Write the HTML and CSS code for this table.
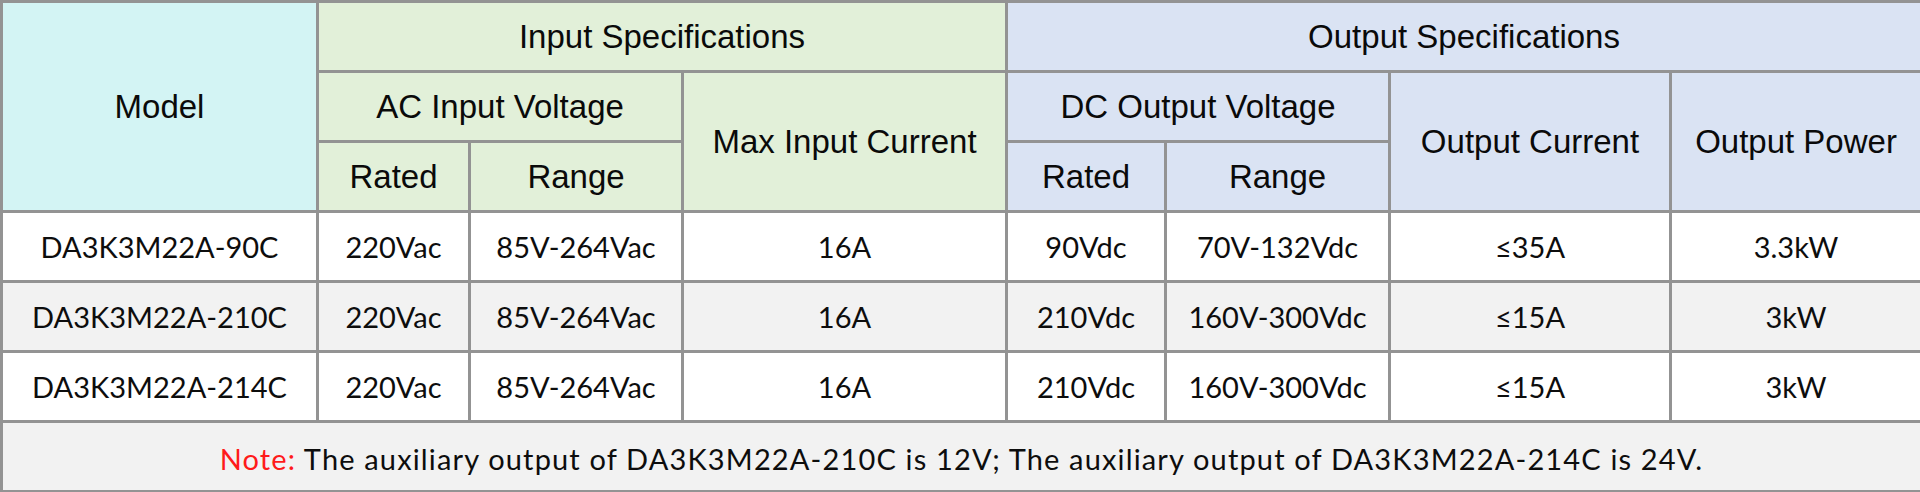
FILE: index.html
```html
<!DOCTYPE html>
<html lang="en">
<head>
<meta charset="utf-8">
<title>DA3K3M22A Specifications</title>
<link rel="stylesheet" href="styles.css">
</head>
<body>
<table class="spec">
  <colgroup>
    <col class="c-model">
    <col class="c-in-rated">
    <col class="c-in-range">
    <col class="c-in-max">
    <col class="c-out-rated">
    <col class="c-out-range">
    <col class="c-out-cur">
    <col class="c-out-pow">
  </colgroup>
  <thead>
    <tr class="hrow">
      <th rowspan="3" class="h-model">Model</th>
      <th colspan="3" class="h-in">Input Specifications</th>
      <th colspan="4" class="h-out">Output Specifications</th>
    </tr>
    <tr class="hrow">
      <th colspan="2" class="h-in">AC Input Voltage</th>
      <th rowspan="2" class="h-in">Max Input Current</th>
      <th colspan="2" class="h-out">DC Output Voltage</th>
      <th rowspan="2" class="h-out">Output Current</th>
      <th rowspan="2" class="h-out">Output Power</th>
    </tr>
    <tr class="hrow">
      <th class="h-in">Rated</th>
      <th class="h-in">Range</th>
      <th class="h-out">Rated</th>
      <th class="h-out">Range</th>
    </tr>
  </thead>
  <tbody>
    <tr class="drow">
      <td>DA3K3M22A-90C</td>
      <td>220Vac</td>
      <td>85V-264Vac</td>
      <td>16A</td>
      <td>90Vdc</td>
      <td>70V-132Vdc</td>
      <td>≤35A</td>
      <td>3.3kW</td>
    </tr>
    <tr class="drow alt">
      <td>DA3K3M22A-210C</td>
      <td>220Vac</td>
      <td>85V-264Vac</td>
      <td>16A</td>
      <td>210Vdc</td>
      <td>160V-300Vdc</td>
      <td>≤15A</td>
      <td>3kW</td>
    </tr>
    <tr class="drow">
      <td>DA3K3M22A-214C</td>
      <td>220Vac</td>
      <td>85V-264Vac</td>
      <td>16A</td>
      <td>210Vdc</td>
      <td>160V-300Vdc</td>
      <td>≤15A</td>
      <td>3kW</td>
    </tr>
    <tr class="drow note-row">
      <td colspan="8"><span class="note-label">Note:</span> The auxiliary output of DA3K3M22A-210C is 12V; The auxiliary output of DA3K3M22A-214C is 24V.</td>
    </tr>
  </tbody>
</table>
</body>
</html>
```

FILE: styles.css
```css
html, body {
  margin: 0;
  padding: 0;
  background: #ffffff;
}

.spec {
  width: 1920px;
  table-layout: fixed;
  border-collapse: collapse;
  color: #000;
}

.c-model { width: 316px; }
.c-in-rated { width: 152px; }
.c-in-range { width: 213px; }
.c-in-max { width: 324px; }
.c-out-rated { width: 159px; }
.c-out-range { width: 224px; }
.c-out-cur { width: 281px; }
.c-out-pow { width: 251px; }

.spec th,
.spec td {
  border: 3px solid #939393;
  padding: 0;
  text-align: center;
  vertical-align: middle;
}

.spec th {
  font-family: "Liberation Sans", Arial, sans-serif;
  font-weight: normal;
  font-size: 33px;
  color: #0a0a0a;
}

.hrow { height: 70px; }
.drow { height: 70px; }

.h-model { background: #d3f4f4; }
.h-in { background: #e2f0d9; }
.h-out { background: #dae3f3; }

.spec td {
  font-family: Lato, "Liberation Sans", sans-serif;
  font-size: 29px;
  color: #0d0d0d;
  background: #ffffff;
}

.drow.alt td { background: #f2f2f2; }
.note-row td {
  background: #f2f2f2;
  letter-spacing: 1.15px;
  padding-top: 4px;
}

.note-label { color: #ff1a1a; }
```
